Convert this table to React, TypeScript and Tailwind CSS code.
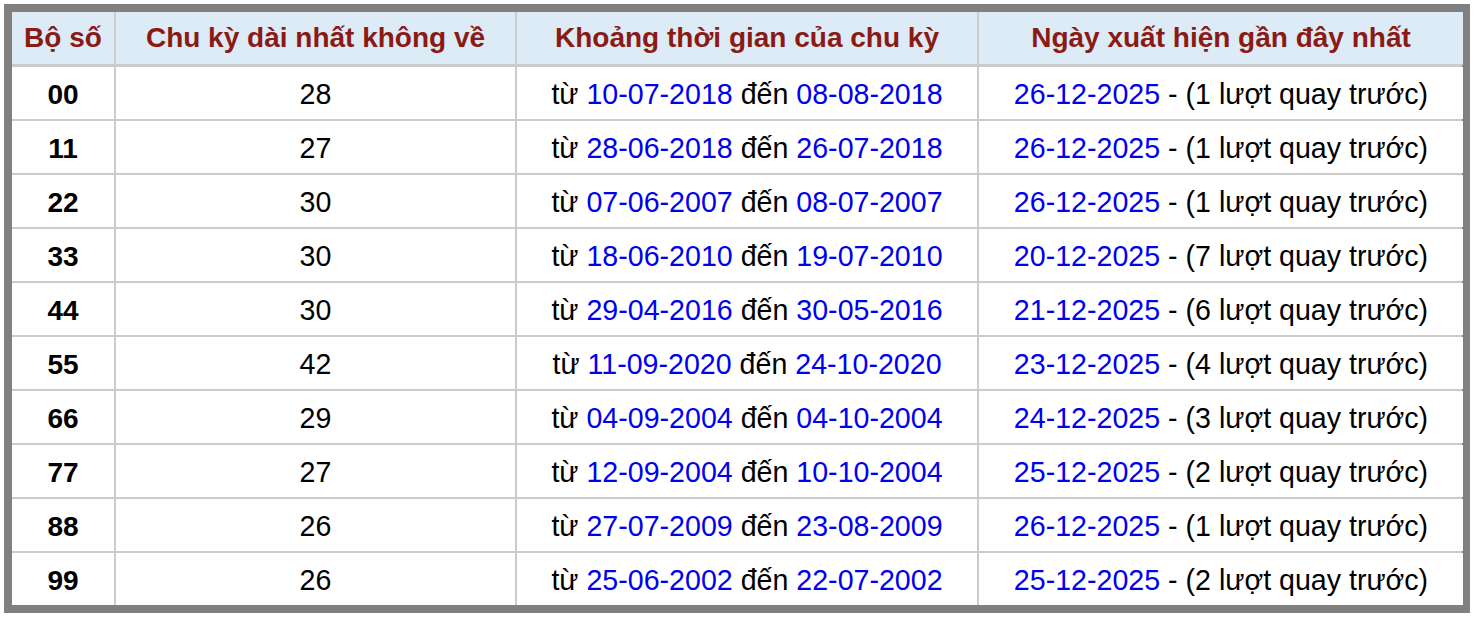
const rows = [
  { so: "00", ky: 28, from: "10-07-2018", to: "08-08-2018", last: "26-12-2025", n: 1 },
  { so: "11", ky: 27, from: "28-06-2018", to: "26-07-2018", last: "26-12-2025", n: 1 },
  { so: "22", ky: 30, from: "07-06-2007", to: "08-07-2007", last: "26-12-2025", n: 1 },
  { so: "33", ky: 30, from: "18-06-2010", to: "19-07-2010", last: "20-12-2025", n: 7 },
  { so: "44", ky: 30, from: "29-04-2016", to: "30-05-2016", last: "21-12-2025", n: 6 },
  { so: "55", ky: 42, from: "11-09-2020", to: "24-10-2020", last: "23-12-2025", n: 4 },
  { so: "66", ky: 29, from: "04-09-2004", to: "04-10-2004", last: "24-12-2025", n: 3 },
  { so: "77", ky: 27, from: "12-09-2004", to: "10-10-2004", last: "25-12-2025", n: 2 },
  { so: "88", ky: 26, from: "27-07-2009", to: "23-08-2009", last: "26-12-2025", n: 1 },
  { so: "99", ky: 26, from: "25-06-2002", to: "22-07-2002", last: "25-12-2025", n: 2 },
];

const headers = [
  "Bộ số",
  "Chu kỳ dài nhất không về",
  "Khoảng thời gian của chu kỳ",
  "Ngày xuất hiện gần đây nhất",
];

export default function App() {
  return (
    <div className="bg-white w-[1478px] h-[620px] p-1 font-['Liberation_Sans',Arial,sans-serif]">
      <div className="w-[1466px] border-8 border-[#808080]">
        <div className="grid grid-cols-[102px_399px_460px_484px] gap-[2px] bg-[#cccccc] leading-none">
          {/* Header */}
          {headers.map((h) => (
            <div
              key={h}
              className="h-[53px] border-b border-[#cccccc] bg-[#dcebf5] flex items-center justify-center text-[28px] font-bold text-[#8b1a14] whitespace-nowrap"
            >
              {h}
            </div>
          ))}

          {/* Rows */}
          {rows.map((r) => (
            <div key={r.so} className="contents">
              <div className="h-[52px] pt-[3px] bg-white flex items-center justify-center text-[28px] font-bold text-black">
                {r.so}
              </div>
              <div className="h-[52px] pt-[3px] bg-white flex items-center justify-center text-[28.6px] text-black">
                {r.ky}
              </div>
              <div className="h-[52px] pt-[3px] bg-white flex items-center justify-center text-[28.6px] text-black whitespace-pre">
                từ <span className="text-[#0000f0]">{r.from}</span> đến{" "}
                <span className="text-[#0000f0]">{r.to}</span>
              </div>
              <div className="h-[52px] pt-[3px] bg-white flex items-center justify-center text-[28.6px] text-black whitespace-pre">
                <span className="text-[#0000f0]">{r.last}</span> - ({r.n} lượt quay trước)
              </div>
            </div>
          ))}
        </div>
      </div>
    </div>
  );
}
